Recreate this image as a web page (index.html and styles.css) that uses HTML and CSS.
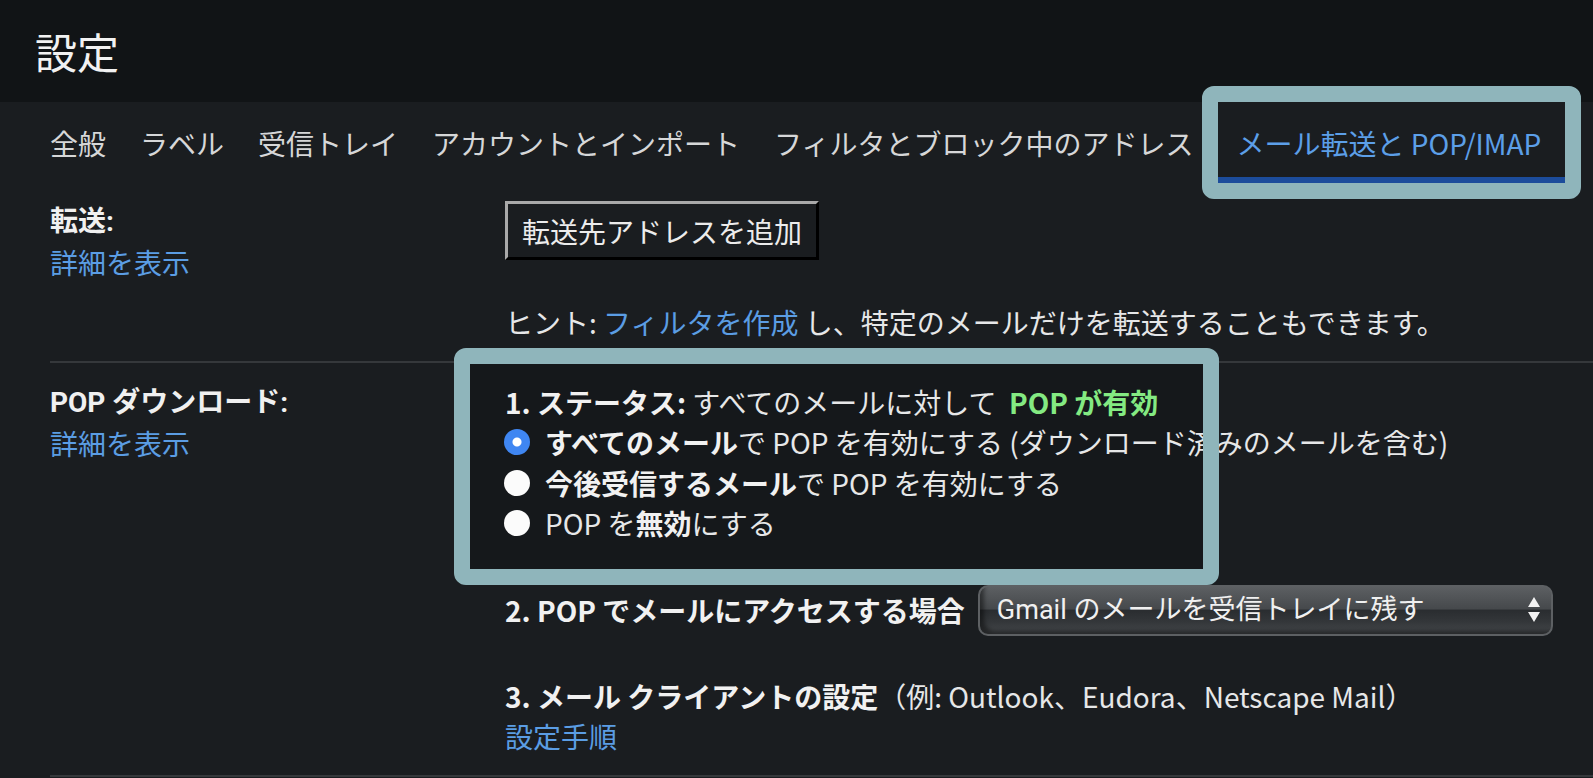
FILE: index.html
```html
<!DOCTYPE html>
<html lang="ja">
<head>
<meta charset="utf-8">
<title>設定</title>
<link rel="stylesheet" href="styles.css">
</head>
<body>
<header class="header">
  <h1 class="title">設定</h1>
</header>
<nav class="tabs">
  <div class="tab">全般</div>
  <div class="tab">ラベル</div>
  <div class="tab">受信トレイ</div>
  <div class="tab">アカウントとインポート</div>
  <div class="tab">フィルタとブロック中のアドレス</div>
  <div class="tab tab-active">メール転送と POP/IMAP</div>
</nav>
<main class="content">
  <section class="row row-forward">
    <div class="label">
      <div class="label-title">転送:</div>
      <a class="link">詳細を表示</a>
    </div>
    <div class="body">
      <button class="btn">転送先アドレスを追加</button>
      <p class="hint">ヒント: <a class="link">フィルタを作成</a> し、特定のメールだけを転送することもできます。</p>
    </div>
  </section>
  <section class="row row-pop">
    <div class="label">
      <div class="label-title">POP ダウンロード:</div>
      <a class="link">詳細を表示</a>
    </div>
    <div class="body">
      <div class="status-group">
        <div class="line"><b class="strong">1. ステータス:</b> すべてのメールに対して&nbsp; <b class="green">POP が有効</b></div>
        <div class="radio-line"><span class="radio radio-on"></span><span><b class="strong">すべてのメール</b>で POP を有効にする (ダウンロード済みのメールを含む)</span></div>
        <div class="radio-line"><span class="radio"></span><span><b class="strong">今後受信するメール</b>で POP を有効にする</span></div>
        <div class="radio-line"><span class="radio"></span><span>POP を<b class="strong">無効</b>にする</span></div>
      </div>
      <div class="access-line">
        <b class="strong">2. POP でメールにアクセスする場合</b>
        <div class="select">
          <span class="select-text">Gmail のメールを受信トレイに残す</span>
          <svg class="select-arrows" width="14" height="28" viewBox="0 0 14 28"><path d="M7 1 L13 11 L1 11 Z" fill="#f2f2f2"/><path d="M1 16 L13 16 L7 26 Z" fill="#f2f2f2"/></svg>
        </div>
      </div>
      <div class="client"><b class="strong">3. メール クライアントの設定</b>（例: Outlook、Eudora、Netscape Mail）</div>
      <a class="link link-block">設定手順</a>
    </div>
  </section>
</main>
</body>
</html>
```

FILE: styles.css
```css
html, body {
  margin: 0;
  padding: 0;
}
body {
  background: #1a1d20;
  color: #e6e7e8;
  font-family: "Noto Sans CJK JP", "Noto Sans", sans-serif;
  font-size: 28px;
  overflow: hidden;
  width: 1593px;
  height: 778px;
}
.header {
  height: 102px;
  background: #111416;
  display: flex;
  align-items: center;
  padding-left: 35px;
}
.title {
  margin: 0;
  font-size: 42px;
  font-weight: 400;
  color: #f2f2f2;
  line-height: 1;
}
.tabs {
  height: 81px;
  display: flex;
  padding-left: 33px;
  font-size: 28px;
  color: #d6d7d8;
}
.tab {
  display: flex;
  align-items: center;
  padding: 0 17px;
  white-space: nowrap;
}
.tab-active {
  position: relative;
  margin-left: 7px;
  color: #5c9fe8;
  box-shadow: inset 0 -6px 0 #1c4c9b;
  padding: 0 24px 0 19px;
}
.tab-active::after {
  content: "";
  position: absolute;
  top: -16px;
  left: -16px;
  right: -16px;
  bottom: -16px;
  border: 16px solid #8fb5bb;
  border-radius: 12px;
  z-index: 2;
}
.content {
  margin-left: 50px;
}
.row {
  display: grid;
  grid-template-columns: 455px 1fr;
  border-bottom: 2px solid #35383b;
  line-height: 41px;
}
.row-forward {
  padding: 18px 0 18px;
}
.row-pop {
  padding: 19px 0 20px;
}
.label-title {
  font-family: "Roboto", "Noto Sans CJK JP", sans-serif;
  font-weight: 700;
  color: #f0f0f0;
}
.link {
  color: #5b9de4;
  display: block;
  cursor: pointer;
}
.hint .link {
  display: inline;
}
.btn {
  display: block;
  height: 59px;
  box-sizing: border-box;
  padding: 0 14px;
  background: #1a1d20;
  color: #ececec;
  font-family: inherit;
  font-size: 28px;
  border: 3px solid;
  border-color: #a9a9a9 #000 #000 #a9a9a9;
  line-height: 1;
}
.hint {
  margin: 42px 0 0;
  white-space: nowrap;
}
.strong {
  font-weight: 700;
  color: #f1f1f1;
}
.green {
  font-weight: 700;
  color: #84ea82;
}
.status-group {
  position: relative;
  z-index: 0;
  white-space: nowrap;
}
.line {
  line-height: 40px;
}
.status-group::before {
  content: "";
  position: absolute;
  top: -18px;
  left: -35px;
  width: 733px;
  height: 205px;
  background: #15181b;
  z-index: -1;
}
.status-group::after {
  content: "";
  position: absolute;
  top: -34px;
  left: -51px;
  width: 765px;
  height: 237px;
  box-sizing: border-box;
  border: 16px solid #8fb5bb;
  border-radius: 12px;
  z-index: 1;
}
.radio-line {
  display: flex;
  align-items: center;
  gap: 15px;
  line-height: 40.5px;
}
.radio {
  width: 26px;
  height: 26px;
  border-radius: 50%;
  background: #fbfbfb;
  flex: none;
  margin-left: -1px;
}
.radio-on {
  background: radial-gradient(circle, #ffffff 0 4px, #3f86f2 5px);
}
.access-line {
  display: flex;
  align-items: center;
  gap: 13px;
  margin-top: 41px;
  white-space: nowrap;
}
.select {
  width: 575px;
  height: 51px;
  box-sizing: border-box;
  border: 2px solid #5d6063;
  border-radius: 10px;
  background: linear-gradient(to bottom, #5c5f62 0%, #46494c 46%, #2a2d30 50%, #34373a 75%, #45484b 100%);
  box-shadow: inset 7px -6px 4px -3px rgba(0, 0, 0, 0.45);
  display: flex;
  align-items: center;
  justify-content: space-between;
  padding: 0 10px 0 17px;
  font-family: "Roboto", "Noto Sans CJK JP", sans-serif;
  font-size: 27px;
  color: #f0f0f0;
}
.select-arrows {
  flex: none;
}
.client {
  margin-top: 40px;
  white-space: nowrap;
}
.link-block {
  line-height: 38px;
}
```
